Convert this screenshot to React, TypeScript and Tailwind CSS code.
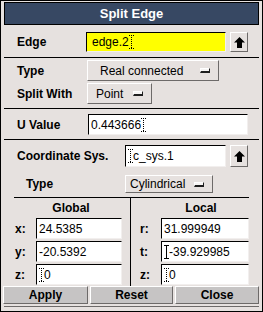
import React from "react";

const font = { fontFamily: '"Liberation Sans", Arial, sans-serif' };

function Caret({ solid = false }: { solid?: boolean }) {
  return (
    <svg width="5" height="14" viewBox="0 0 5 14" className="shrink-0">
      <g stroke="#000" strokeWidth="1" strokeDasharray={solid ? undefined : "1 1"}>
        <line x1="0" y1="0.5" x2="5" y2="0.5" />
        <line x1="2.5" y1="0" x2="2.5" y2="14" />
        <line x1="0" y1="13.5" x2="5" y2="13.5" />
      </g>
    </svg>
  );
}

function Field({
  value,
  w,
  h,
  yellow = false,
  caret,
}: {
  value: string;
  w: string;
  h: string;
  yellow?: boolean;
  caret?: "start" | "end" | "solid";
}) {
  return (
    <div
      className={`${w} ${h} ${yellow ? "bg-[#ffff00]" : "bg-white"} flex items-center pl-[2px] text-[12px] text-black border-t border-l border-black border-b border-r border-b-[#f2efee] border-r-[#f2efee]`}
    >
      {caret === "start" && <Caret />}
      {caret === "solid" && <Caret solid />}
      <span className={yellow ? "pl-[3px]" : ""}>{value}</span>
      {caret === "end" && <Caret />}
    </div>
  );
}

function ArrowButton({ h }: { h: string }) {
  return (
    <div
      className={`w-[18px] ${h} flex items-center justify-center border border-t-white border-l-white border-b-[#6d6a69] border-r-[#6d6a69]`}
    >
      <svg width="11" height="11" viewBox="0 0 11 11">
        <path d="M5.5 0 L11 5.5 L8 5.5 L8 11 L3 11 L3 5.5 L0 5.5 Z" fill="#000" />
      </svg>
    </div>
  );
}

function OptionMenu({ label, w, h, pl }: { label: string; w: string; h: string; pl: string }) {
  return (
    <div
      className={`${w} ${h} ${pl} flex items-center justify-between pr-[8px] text-[12px] text-black border border-t-white border-l-white border-b-[#6d6a69] border-r-[#6d6a69]`}
    >
      <span>{label}</span>
      <span className="w-[10px] h-[5px] bg-[#f7f5f4] border-t border-l border-white border-b-[2px] border-r border-b-[#1e1e1e] border-r-[#1e1e1e]" />
    </div>
  );
}

function Sep() {
  return <div className="h-px bg-black" />;
}

function CoordRow({
  label,
  value,
  lw,
  pl,
  w,
  caret,
}: {
  label: string;
  value: string;
  lw: string;
  pl: string;
  w: string;
  caret?: "start" | "end" | "solid";
}) {
  return (
    <div className="flex items-center h-[21px]">
      <div className={`${lw} ${pl} font-bold text-[12px]`}>{label}</div>
      <Field value={value} w={w} h="h-[21px]" caret={caret} />
    </div>
  );
}

function BottomButton({ label, w }: { label: string; w: string }) {
  return (
    <div
      className={`${w} h-[18px] bg-[#c6c4c4] flex items-center justify-center font-bold text-[12px] text-black border border-t-white border-l-white border-b-[#6d6a69] border-r-[#6d6a69]`}
    >
      {label}
    </div>
  );
}

export default function App() {
  return (
    <div
      style={font}
      className="w-[263px] h-[312px] bg-[#e6e1df] border border-black px-[3px] pt-[1px] flex flex-col text-black overflow-hidden"
    >
      <div className="h-[23px] shrink-0 bg-[#374863] border border-black flex items-center justify-center text-white font-bold text-[13px]">
        Split Edge
      </div>

      <div className="h-[32px] shrink-0 flex items-center pt-[2px]">
        <div className="w-[82px] pl-[13px] font-bold text-[12px]">Edge</div>
        <Field value="edge.2" w="w-[140px]" h="h-[20px]" yellow caret="end" />
        <div className="w-[4px]" />
        <ArrowButton h="h-[20px]" />
      </div>
      <Sep />

      <div className="h-[50px] shrink-0 flex flex-col pt-[2px] gap-[2px]">
        <div className="flex items-center">
          <div className="w-[83px] pl-[13px] font-bold text-[12px]">Type</div>
          <OptionMenu label="Real connected" w="w-[132px]" h="h-[21px]" pl="pl-[12px]" />
        </div>
        <div className="flex items-center">
          <div className="w-[83px] pl-[13px] font-bold text-[12px]">Split With</div>
          <OptionMenu label="Point" w="w-[65px]" h="h-[21px]" pl="pl-[8px]" />
        </div>
      </div>
      <Sep />

      <div className="h-[30px] shrink-0 flex items-center pt-[1px]">
        <div className="w-[84px] pl-[13px] font-bold text-[12px]">U Value</div>
        <Field value="0.443666" w="w-[160px]" h="h-[21px]" caret="end" />
      </div>
      <Sep />

      <div className="h-[57px] shrink-0 flex flex-col pt-[5px]">
        <div className="flex items-center">
          <div className="w-[121px] pl-[13px] font-bold text-[12px]">Coordinate Sys.</div>
          <Field value="c_sys.1" w="w-[101px]" h="h-[22px]" caret="start" />
          <div className="w-[4px]" />
          <ArrowButton h="h-[22px]" />
        </div>
        <div className="flex items-center mt-[8px]">
          <div className="w-[121px] pl-[22px] font-bold text-[12px]">Type</div>
          <OptionMenu label="Cylindrical" w="w-[88px]" h="h-[18px]" pl="pl-[4px]" />
        </div>
      </div>
      <div className="h-px bg-black mx-[10px]" />

      <div className="h-[88px] shrink-0 flex">
        <div className="w-[126px] flex flex-col">
          <div className="h-[20px] flex items-center justify-center font-bold text-[12px] pl-[8px]">Global</div>
          <div className="flex flex-col gap-[2px]">
            <CoordRow label="x:" value="24.5385" lw="w-[32px]" pl="pl-[11px]" w="w-[86px]" />
            <CoordRow label="y:" value="-20.5392" lw="w-[32px]" pl="pl-[11px]" w="w-[86px]" />
            <CoordRow label="z:" value="0" lw="w-[32px]" pl="pl-[11px]" w="w-[86px]" caret="start" />
          </div>
        </div>
        <div className="w-px bg-black" />
        <div className="flex-1 flex flex-col">
          <div className="h-[20px] flex items-center justify-center font-bold text-[12px] pl-[12px]">Local</div>
          <div className="flex flex-col gap-[2px]">
            <CoordRow label="r:" value="31.999949" lw="w-[30px]" pl="pl-[9px]" w="w-[88px]" />
            <CoordRow label="t:" value="-39.929985" lw="w-[30px]" pl="pl-[9px]" w="w-[88px]" caret="solid" />
            <CoordRow label="z:" value="0" lw="w-[30px]" pl="pl-[9px]" w="w-[88px]" caret="start" />
          </div>
        </div>
      </div>

      <div className="flex gap-[2px] -ml-px">
        <BottomButton label="Apply" w="w-[85px]" />
        <BottomButton label="Reset" w="w-[83px]" />
        <BottomButton label="Close" w="w-[84px]" />
      </div>
      <div className="mt-[2px] h-px bg-[#6d6a69]" />
    </div>
  );
}
